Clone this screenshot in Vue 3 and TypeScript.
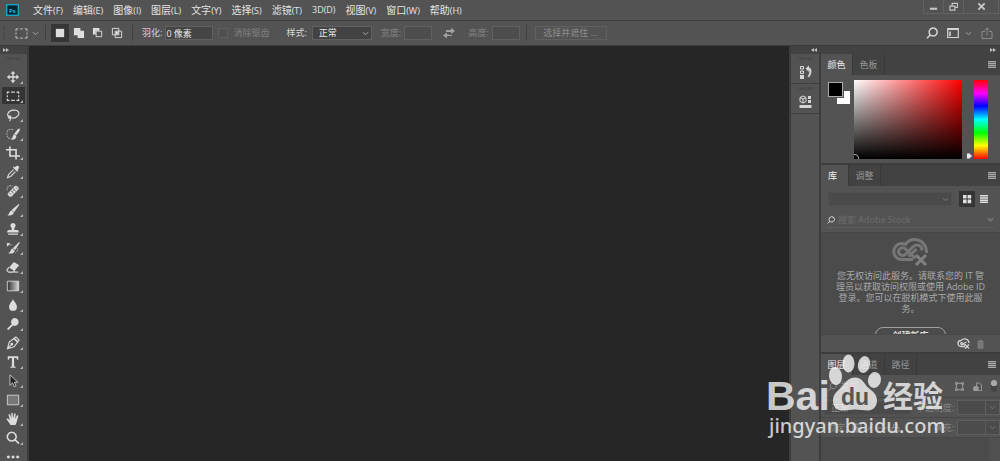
<script setup lang="ts">
import { ref } from 'vue'

interface Stroke {
  d: string
  kind?: 'line' | 'thick' | 'dash' | 'dim' | 'dark' | 'grad'
}
interface Tool {
  name: string
  paths: Stroke[]
  plain?: boolean
}

const menus = [
  ['文件', '(F)'], ['编辑', '(E)'], ['图像', '(I)'], ['图层', '(L)'], ['文字', '(Y)'], ['选择', '(S)'],
  ['滤镜', '(T)'], ['', '3D(D)'], ['视图', '(V)'], ['窗口', '(W)'], ['帮助', '(H)'],
]

const tools: Tool[] = [
  { name: '移动', paths: [{ d: 'M8 1l2.800 3.200H8.800v3h3V5.200L15 8l-3.200 2.800v-2h-3v3h2L8 15l-2.800-3.200h2v-3h-3v2L1 8l3.200-2.800v2h3v-3h-2z' }] },
  { name: '矩形选框', paths: [{ d: 'M1.500 5.500V3.500H4M6 3.500h4M12 3.500h2.500v2M14.500 7.200v2.200M14.500 11v2H12M10 13H6M4 13H1.500v-2M1.500 9.400V7.200', kind: 'line' }] },
  { name: '套索', paths: [{ d: 'M4 10.500C-.5 8.500 2.500 3 8.500 2.500S16 6 13.500 9 7 12 4 10.500M2.500 10c0-1.500 3-1.500 3 .3s-3 1.600-3 0M4.500 11.500c.8 1.200.5 2.500-.5 3.500', kind: 'line' }] },
  { name: '快速选择', paths: [{ d: 'M8 3C4 1.500 1 4 1 8s3 6.500 6.500 5', kind: 'dash' }, { d: 'M15.500 1.500l.3 2.500-4 5.500-2.500-1.500 4-5.500zM9.200 8.300l2.600 2c0 2.800-2 4.500-5.800 4.200 1.800-.9 1.200-4.900 3.200-6.200z' }] },
  { name: '裁剪', paths: [{ d: 'M4.500.5v11H16M0 4.200h11.500V15.500', kind: 'thick' }] },
  { name: '吸管', paths: [{ d: 'M10 2.800c1.200-1.500 2.800-2.600 4.200-1.500s.6 3-1 4.300l.8 1-1.200 1.200-5-5L9 1.700z' }, { d: 'M8.600 5.200L3 10.800l-1.300 3.500 3.600-1.200 5.500-5.600', kind: 'line' }] },
  { name: '修复画笔', paths: [{ d: 'M1.500 7C0 3 4 .8 7.500 2.500', kind: 'dash' }, { d: 'M2.200 10.500l8-8.300c1.500-1.400 5.600 2.200 4.200 3.800l-8 8.300c-1.500 1.500-5.700-2.300-4.200-3.800z' }, { d: 'M5.500 7.500l3.500 3.500M8 5l3.500 3.400M7 8.800l2.500-2.500M3.700 10.200l2 2M11.500 4l1.500 1.600', kind: 'dark' }] },
  { name: '画笔', paths: [{ d: 'M14.500 1.200l.8.800-6.100 8.500-2.800-2.500zM6.200 8.500l2.700 2.400c-.5 2.800-3.900 4.200-7.500 3 2.500-.4 2.200-4.800 4.800-5.400z' }] },
  { name: '仿制图章', paths: [{ d: 'M8 1a3 3 0 0 1 2 5.200c-.6.700-.7 1.800-.4 2.800H13c1.200 0 1.700 1 1.700 3H1.300c0-2 .5-3 1.700-3h3.400c.3-1 .2-2.100-.4-2.800A3 3 0 0 1 8 1zM2.500 13h11v1.700h-11z' }] },
  { name: '历史记录画笔', paths: [{ d: 'M1 4.500h6.500M12.500 8c2 1 .5 4-2 5.500', kind: 'dash' }, { d: 'M1 2.200l4 .3-3.800 4zM15 1l.8.900-5.400 8.500-2.600-2.200zM7.300 8.600l2.700 2.400c-.5 2.800-3.900 4-7.500 2.900 2.800-.4 2.400-4.500 4.800-5.300z' }] },
  { name: '橡皮擦', paths: [{ d: 'M9 2.200L15 6l-5.500 6.500-6-4z' }, { d: 'M3.400 8.500L1.300 11c-.5.800-.2 1.600.5 2l1.300.8h5l2-2', kind: 'line' }, { d: 'M9 13.800h5', kind: 'line' }] },
  { name: '渐变', paths: [{ d: 'M1.500 2.500h13v11h-13z', kind: 'grad' }] },
  { name: '模糊', paths: [{ d: 'M8 1.200c1 3 4.500 5.500 4.500 9a4.500 4.500 0 0 1-9 0c0-3.500 3.500-6 4.500-9z' }] },
  { name: '减淡', paths: [{ d: 'M10 1.200a4.500 4.500 0 1 1-2.100 8.500L3 14.700c-.6.500-2-.8-1.500-1.500l5-5A4.500 4.500 0 0 1 10 1.200z' }] },
  { name: '钢笔', paths: [{ d: 'M1.700 14.500l2-7.500L9 3l4.200 4.200-4 5.200zM9.500 2.500l1.800-1.400 3.600 3.600-1.400 1.900zM2 14.200l5-5M7 8.200a1 1 0 1 0 .1 1.900A1 1 0 0 0 7 8.200', kind: 'line' }] },
  { name: '横排文字', paths: [{ d: 'M2 1.500h12v4h-1.300c-.1-1.500-.7-2-2-2H9.300v8.700c0 .9.300 1.200 1.700 1.200v1.100H5v-1.100c1.400 0 1.700-.3 1.700-1.200V3.500H5.300c-1.300 0-1.900.5-2 2H2z' }] },
  { name: '路径选择', paths: [{ d: 'M4.500 1v12l3-2.900 1.800 4.400 2.200-1-1.900-4.100h4z', kind: 'dim' }] },
  { name: '矩形', paths: [{ d: 'M1.500 2.500h13v11h-13z', kind: 'grad' }] },
  { name: '抓手', paths: [{ d: 'M5.200 14.800C4 13 1.600 9.600.8 8.500c-.4-1.100.9-1.600 1.700-.8l1.800 1.800L3 3.500c-.2-1.200 1.300-1.500 1.700-.4l1.500 4-.2-5.300C6 .5 7.600.5 7.700 1.700L8.300 7l1-4.800c.3-1.200 1.800-.9 1.700.3L10.500 7.600l1.900-3.300c.6-1 2-.4 1.600.7-1 3-1.500 7-3.200 9.800z' }] },
  { name: '缩放', paths: [{ d: 'M6.500 1.500a5 5 0 1 0 .1 0M10.200 9.800l4.600 4.600', kind: 'thick' }] },
  { name: '编辑工具栏', plain: true, paths: [{ d: 'M2.700 6.300a1.700 1.700 0 1 0 .1 0M8 6.300a1.700 1.700 0 1 0 .1 0M13.300 6.300a1.700 1.700 0 1 0 .1 0' }] },
]

const modes: { name: string; d: string; line?: string }[] = [
  { name: '新选区', d: 'M2 2h9v9H2z' },
  { name: '添加到选区', d: 'M1 1h7v3h4v8H5V9H1z' },
  { name: '从选区减去', d: 'M1 1h7v3H4v4H1z', line: 'M4.500 4.500h6v6h-6z' },
  { name: '与选区交叉', d: 'M5 5h3v3H5z', line: 'M1.500 1.500h7v7h-7zM4.500 4.500h7v7h-7z' },
]

const activeTool = ref(1)
const activeMode = ref(0)
const feather = ref('0 像素')
const message = ['您无权访问此服务。请联系您的 IT 管', '理员以获取访问权限或使用 Adobe ID', '登录。您可以在脱机模式下使用此服', '务。']
</script>

<template>
  <div class="app">
    <header class="menubar">
      <svg class="logo" viewBox="0 0 13 12" aria-label="Ps">
        <rect x=".7" y=".7" width="11.600" height="10.600" fill="#04222f" stroke="#18a5c4" stroke-width="1.400" />
        <text x="3" y="8.600" font-size="6" font-weight="700" fill="#20b4d6">Ps</text>
      </svg>
      <nav>
        <button v-for="[label, key] in menus" :key="key" type="button">{{ label }}<span>{{ key }}</span></button>
      </nav>
      <div class="window-buttons">
        <button type="button" aria-label="最小化"><svg viewBox="0 0 10 10"><path d="M1 7.500h8" stroke-width="2.400" /></svg></button>
        <button type="button" aria-label="还原"><svg viewBox="0 0 10 10"><path d="M3.500 4V1.500h6v4.500H7M1 4.500h5.500V9H1z" stroke-width="1.300" /></svg></button>
        <button type="button" aria-label="关闭" class="close"><svg viewBox="0 0 10 10"><path d="M1.500 1.500l7 7M8.500 1.500l-7 7" stroke-width="2" /></svg></button>
      </div>
    </header>

    <div class="options">
      <i class="grip-v"></i>
      <button type="button" class="preset" aria-label="工具预设">
        <svg class="marquee" viewBox="0 0 14 12"><path d="M1 3.500V1h2.500M5.500 1h3M10.500 1H13v2.500M13 5v2M13 8.500V11h-2.500M8.500 11h-3M3.500 11H1V8.500M1 7V5" /></svg>
        <svg class="chev" viewBox="0 0 8 6"><path d="M1 1.500l3 3 3-3" /></svg>
      </button>
      <i class="rule"></i>
      <div class="modes">
        <button v-for="(m, i) in modes" :key="m.name" type="button" :aria-label="m.name" :class="{ on: i === activeMode }" @click="activeMode = i">
          <svg viewBox="0 0 13 13"><path :d="m.d" /><path v-if="m.line" class="outline" :d="m.line" /></svg>
        </button>
      </div>
      <i class="rule"></i>
      <label class="field">羽化:<input v-model="feather" class="wide" /></label>
      <label class="check off"><input type="checkbox" disabled />消除锯齿</label>
      <label class="field style-field">样式:
        <span class="pick"><select><option>正常</option></select><svg class="chev" viewBox="0 0 8 6"><path d="M1 1.500l3 3 3-3" /></svg></span>
      </label>
      <label class="field off">宽度:<input disabled /></label>
      <button type="button" class="swap" aria-label="互换"><svg viewBox="0 0 12 12"><path d="M3 3h5V.8L12 4 8 7V5H3zM9 9H4v2.200L0 8.500l4-3V7.500h2V8h3z" /></svg></button>
      <label class="field off">高度:<input disabled /></label>
      <i class="rule"></i>
      <button type="button" class="mask" disabled>选择并遮住 ...</button>
      <div class="right-tools">
        <button type="button" aria-label="搜索"><svg viewBox="0 0 12 12"><path d="M7.200 1a4 4 0 1 1-.1 0M4.300 7.800L1 11.200" stroke-width="1.500" /></svg></button>
        <button type="button" aria-label="工作区" class="workspace-btn"><svg viewBox="0 0 12 12"><path d="M.7 1.500h10.600v9H.7z" stroke-width="1.200" /><path d="M1 2.200h10M3 4.500v4.500" stroke-width="1.600" /></svg><svg class="chev" viewBox="0 0 8 6"><path d="M1 1.500l3 3 3-3" /></svg></button>
        <button type="button" aria-label="共享" class="share"><svg viewBox="0 0 12 12"><path d="M4 4.500H1v7h10v-7H8M6 8.500V1M3.500 3.300L6 .8l2.500 2.500" /></svg></button>
      </div>
    </div>

    <main class="work">
      <aside class="toolbar">
        <div class="strip"><svg viewBox="0 0 6 4"><path d="M0 0l3 2-3 2zM3 0l3 2-3 2z" /></svg></div>
        <i class="grip-h"></i>
        <button v-for="(t, i) in tools" :key="t.name" type="button" :aria-label="t.name" :class="{ on: i === activeTool }" @click="activeTool = i">
          <svg class="tool" viewBox="0 0 16 16">
            <defs><linearGradient :id="'fade' + i"><stop offset="0" :stop-color="i === 11 ? '#303030' : '#777'" /><stop offset="1" :stop-color="i === 11 ? '#d8d8d8' : '#777'" /></linearGradient></defs>
            <path v-for="(p, n) in t.paths" :key="n" :d="p.d" :class="p.kind" :fill="p.kind === 'grad' ? `url(#fade${i})` : undefined" />
          </svg>
          <svg v-if="!t.plain" class="corner" viewBox="0 0 3 3"><path d="M3 0v3H0z" /></svg>
        </button>
      </aside>

      <section class="canvas"></section>

      <aside class="dock">
        <div class="strip end"><svg viewBox="0 0 6 4"><path d="M3 0L0 2l3 2zM6 0L3 2l3 2z" /></svg></div>
        <div class="dock-item">
          <i class="grip-h"></i>
          <button type="button" aria-label="历史记录"><svg viewBox="0 0 13 14"><path class="outline" d="M1.500 1.500h3v2.500h-3zM1.500 6h3v2.500h-3z" /><path d="M1 10h4v4H1zM6.500 3.500L10 .5v2c3 .6 3.500 5 .3 9.500H8.500c2-3.500 2.300-6.500 1.300-7.200V7z" /></svg></button>
        </div>
        <div class="dock-item">
          <i class="grip-h"></i>
          <button type="button" aria-label="属性"><svg viewBox="0 0 13 14"><path class="outline" d="M4 1L7 2.500v4L4 8 1 6.500v-4zM1 2.500L4 4l3-1.500M4 4v4" /><path d="M9 1h3v3H9zM9 5h3v3H9zM.5 10h12v3H.5z" /></svg></button>
        </div>
        <div class="dock-fill"></div>
      </aside>

      <aside class="panels">
        <div class="strip end"><svg viewBox="0 0 6 4"><path d="M0 0l3 2-3 2zM3 0l3 2-3 2z" /></svg></div>

        <section class="panel">
          <div class="tabs"><button type="button" class="on">颜色</button><button type="button">色板</button><button type="button" class="burger" aria-label="面板菜单"><i></i></button></div>
          <div class="color-body">
            <div class="swatches"><button type="button" class="bg" aria-label="背景色"></button><button type="button" class="fg" aria-label="前景色"></button></div>
            <div class="field-box"><svg viewBox="0 0 6 6"><path d="M0 1.500A4 4 0 0 1 4.500 6" /></svg></div>
            <svg class="pointer" viewBox="0 0 6 6"><path d="M0 0h3l3 3-3 3H0z" /></svg>
            <div class="hue"></div>
          </div>
        </section>

        <section class="panel">
          <div class="tabs lib"><button type="button" class="on">库</button><button type="button">调整</button><button type="button" class="burger" aria-label="面板菜单"><i></i></button></div>
          <div class="lib-top">
            <span class="pick flat"><select aria-label="库列表" disabled></select><svg class="chev" viewBox="0 0 8 6"><path d="M1 1.500l3 3 3-3" /></svg></span>
            <button type="button" class="on" aria-label="网格视图"><svg viewBox="0 0 10 10"><path d="M1 1h3.600v3.600H1zM5.600 1h3.600v3.600H5.600zM1 5.600h3.600v3.600H1zM5.600 5.600h3.600v3.600H5.600z" /></svg></button>
            <button type="button" aria-label="列表视图"><svg viewBox="0 0 10 10"><path d="M1 1h8v1.500H1zM1 3.200h8v1.500H1zM1 5.400h8v1.500H1zM1 7.600h8v1.500H1z" /></svg></button>
          </div>
          <label class="search">
            <svg viewBox="0 0 12 12"><path d="M7.200 1a4 4 0 1 1-.1 0M4.300 7.800L1 11.200" /></svg>
            <input placeholder="搜索 Adobe Stock" />
            <svg class="chev" viewBox="0 0 8 6"><path d="M1 1.500l3 3 3-3" /></svg>
          </label>
          <div class="lib-content">
            <svg class="cloud" viewBox="0 0 37 28">
              <path d="M21 21.500H10A8 8 0 0 1 9.500 5.500c1.500 0 2.500.2 4 .8C16 2.800 19 1.500 22.500 1.500 30 1.500 35 8 34.500 15" />
              <path d="M23.500 20.500L13.500 11C10 8 5 11.500 7 15.500c1.500 2.700 4.800 2.300 7 .3l7-7c4-3.500 9-1.300 9 3.700" />
              <path d="M16.500 18.500l8-7.500" />
              <path class="cross" d="M24 17l10 10M34 17L24 27" />
            </svg>
            <p><span v-for="line in message" :key="line">{{ line }}</span></p>
            <button type="button">创建新库</button>
          </div>
          <div class="lib-foot">
            <svg class="cc" viewBox="0 0 13 12"><path d="M8 8.500H4a3 3 0 0 1 0-6c3-3 8-1.500 8 2.500M8 7L5.500 5C4 4 3 6 4.500 6.800c1.500.6 2.500-2.800 5-2.300M8 6.500l4 4M12 6.500l-4 4" /></svg>
            <svg class="bin" viewBox="0 0 10 12"><path d="M1 3h8M3.500 3V1.500h3V3M2 4.500V11h6V4.500zM4 5v5M6 5v5" /></svg>
          </div>
        </section>

        <section class="panel layers">
          <div class="tabs"><button type="button" class="on">图层</button><button type="button">通道</button><button type="button">路径</button><button type="button" class="burger" aria-label="面板菜单"><i></i></button></div>
          <div class="row filter">
            <label><svg viewBox="0 0 12 12"><path d="M7.200 1a4 4 0 1 1-.1 0M4.300 7.800L1 11.200" /></svg>类型</label>
            <span class="filter-icons">
              <svg viewBox="0 0 10 10"><path d="M1.500 2v6M8.500 2v6M2 1.500h6M2 8.500h6M.5.5h2v2h-2zM7.500.5h2v2h-2zM.5 7.500h2v2h-2zM7.500 7.500h2v2h-2z" /></svg>
              <svg viewBox="0 0 10 10"><path d="M4 5V1h3l2.500 2.500v6H6M1 5.500h4.500v4H1z" /><path d="M1 5.500h4.500v4H1z" fill="#999" /></svg>
              <i class="toggle"></i>
            </span>
          </div>
          <div class="row">
            <span class="pick flat"><select aria-label="混合模式"><option>正常</option></select></span>
            <label>不透明度:<input disabled /></label>
            <button type="button" aria-label="不透明度选项"><svg class="chev" viewBox="0 0 8 6"><path d="M1 1.500l3 3 3-3" /></svg></button>
          </div>
          <div class="row">
            <span class="lock">锁定:
              <svg viewBox="0 0 52 10"><path d="M1 1h8v8H1zM1 5h8M5 1v8M14 9l7-8M26 5h9M30.500.5v9M40 4.500h7V9h-7zM41.500 4V1h4v3" /></svg>
            </span>
            <label>填充:<input disabled /></label>
            <button type="button" aria-label="填充选项"><svg class="chev" viewBox="0 0 8 6"><path d="M1 1.500l3 3 3-3" /></svg></button>
          </div>
          <div class="layer-list"><i></i></div>
        </section>
      </aside>
    </main>

    <svg class="watermark" viewBox="0 0 240 116" aria-label="Baidu 经验 jingyan.baidu.com">
      <g fill="#fff" fill-opacity=".76">
        <text x="6" y="65" font-size="41" class="brand">Bai</text>
        <ellipse cx="75.500" cy="31" rx="6.500" ry="9" transform="rotate(-8 75.500 31)" />
        <ellipse cx="88.500" cy="18.500" rx="6" ry="9" />
        <ellipse cx="104" cy="19.500" rx="6" ry="8.500" transform="rotate(12 104 19.500)" />
        <ellipse cx="114.500" cy="35" rx="6.500" ry="8" transform="rotate(12 114.500 35)" />
        <path d="M95 32.500c7 0 9 6 13 10 5 4 9 7 9 13 0 6-4 10-9 10-5 0-9-1-13-1s-8 1-13 1c-6 0-9-4-9-10 0-6 4-9 8-13 4-4 7-10 14-10z" />
        <text x="123" y="62" font-size="30" class="cn">经验</text>
        <text x="9" y="88" font-size="20" class="url">jingyan.baidu.com</text>
      </g>
      <text x="81" y="60" font-size="23" class="brand" fill="#555">du</text>
    </svg>
  </div>
</template>

<style>
body { margin: 0; background: #262626; }
</style>

<style scoped>
.app {
  position: relative; height: 100vh; display: flex; flex-direction: column; overflow: hidden;
  background: #3d3d3d; color: #d6d6d6; font: 9px/12px "Open Sans", "Noto Sans CJK SC", sans-serif;
}
* { box-sizing: border-box; }
button, input, select { font: inherit; color: inherit; border: 0; padding: 0; margin: 0; background: none; border-radius: 0; }
button { display: flex; align-items: center; justify-content: center; }
svg { display: block; flex: none; }
i { display: block; }

.menubar { display: flex; align-items: center; height: 20px; background: #535353; padding-left: 6px; flex: none; }
.logo { width: 13px; height: 12px; }
.menubar nav { display: flex; gap: 10px; margin-left: 14px; font-size: 10px; color: #e4e4e4; }
.menubar nav button { white-space: nowrap; align-items: baseline; }
.menubar nav span { font-size: 9px; }
.window-buttons { display: flex; margin-left: auto; align-self: flex-start; border: 1px solid #626262; border-top: 0; margin-right: 1px; }
.window-buttons button { width: 20px; height: 13px; border-right: 1px solid #626262; }
.window-buttons .close { width: 34px; border: 0; }
.window-buttons svg { width: 9px; height: 9px; fill: none; stroke: #c6c6c6; }

.options { display: flex; align-items: center; height: 24px; margin: 1px 0; background: #535353; flex: none; white-space: nowrap; }
.grip-v { width: 2px; height: 14px; margin-left: 3px; background: repeating-linear-gradient(#454545 0 1px, #535353 1px 2px); }
.preset { gap: 4px; margin: 0 6px 0 10px; }
.marquee { width: 13px; height: 11px; fill: none; stroke: #ccc; }
.chev { width: 7px; height: 5px; fill: none; stroke: #a5a5a5; stroke-width: 1.2; }
.rule { width: 1px; height: 16px; background: #404040; flex: none; }
.modes { display: flex; gap: 1px; margin: 0 6px 0 5px; }
.modes button { width: 18px; height: 18px; }
.modes .on { background: #363636; }
.modes svg { width: 12px; height: 12px; fill: #dedede; }
.outline { fill: none; stroke: #dedede; }
.field, .check { display: flex; align-items: center; gap: 3px; margin-left: 9px; }
.field input { width: 28px; height: 14px; border: 1px solid #616161; background: #4d4d4d; }
.field .wide { width: 48px; background: #454545; color: #e8e8e8; }
.off { color: #818181; }
.check { gap: 5px; margin-left: 5px; }
.check input { appearance: none; width: 10px; height: 10px; border: 1px solid #5f5f5f; background: #4f4f4f; }
.style-field { margin-left: 17px; gap: 5px; }
.pick { display: grid; align-items: center; }
.pick > * { grid-area: 1 / 1; }
.pick select { appearance: none; width: 60px; height: 14px; padding-left: 6px; background: #434343; border: 1px solid #616161; color: #e8e8e8; outline: 0; opacity: 1; }
.pick .chev { justify-self: end; margin-right: 3px; pointer-events: none; }
.swap { margin: 0 4px 0 11px; }
.swap svg { width: 12px; height: 12px; fill: #a2a2a2; }
.options .field + .rule { margin: 0 8px 0 6px; }
.options .modes + .rule { margin: 0; }
.mask { width: 72px; height: 14px; border: 1px solid #606060; color: #8e8e8e; }
.right-tools { display: flex; align-items: center; gap: 9px; margin-left: auto; margin-right: 7px; }
.right-tools svg { width: 12px; height: 12px; fill: none; stroke: #d4d4d4; }
.right-tools .workspace-btn { gap: 6px; }
.right-tools .chev { width: 7px; height: 5px; stroke: #a5a5a5; }
.right-tools .share svg { stroke: #8b8b8b; }

.work { flex: 1; display: flex; min-height: 0; }
.strip { height: 8px; background: #424242; display: flex; align-items: center; padding: 0 3px; flex: none; }
.strip.end { justify-content: flex-end; padding-right: 4px; }
.strip svg { width: 6px; height: 4px; fill: #bdbdbd; }
.toolbar { width: 27px; margin-right: 2px; background: #535353; display: flex; flex-direction: column; flex: none; }
.grip-h { width: 15px; height: 3px; margin: 3px auto 0; background: repeating-linear-gradient(90deg, #454545 0 1px, #535353 1px 2px); flex: none; }
.toolbar .grip-h { margin: 3px 0 7px 6px; }
.toolbar button { position: relative; justify-content: flex-start; width: 23px; height: 17px; margin: 1px 2px; padding-left: 4px; flex: none; }
.toolbar .on { background: #343434; }
.tool { width: 14px; height: 14px; fill: #dcdcdc; }
.corner { position: absolute; right: 2px; bottom: 1px; width: 3px; height: 3px; fill: #b5b5b5; }
.tool .line, .tool .thick, .tool .dash { fill: none; stroke: #dcdcdc; stroke-width: 1.3; }
.tool .thick { stroke-width: 1.8; }
.tool .dash { stroke: #a5a5a5; stroke-dasharray: 2 1; }
.tool .dark { fill: none; stroke: #666; }
.tool .dim { fill: #222; stroke: #d0d0d0; stroke-width: 1; }
.tool .grad { stroke: #d8d8d8; }
.canvas { flex: 1; background: #262626; }

.dock { width: 30px; margin-left: 2px; display: flex; flex-direction: column; flex: none; background: #3d3d3d; }
.dock-item { height: 29px; margin: 0 2px 1px 0; background: #535353; }
.dock-item button { width: 100%; height: 24px; }
.dock-item svg { width: 13px; height: 14px; fill: #d6d6d6; }
.dock-fill { flex: 1; margin-right: 2px; background: #535353; }

.panels { display: flex; flex-direction: column; flex: 0 0 179px; min-width: 0; }
.panel { background: #535353; margin-bottom: 2px; flex: none; }
.tabs { display: flex; height: 21px; background: #424242; }
.tabs button { width: 32px; border-right: 1px solid #393939; color: #989898; }
.tabs .on { background: #535353; color: #eee; }
.tabs.lib .on { width: 28px; padding-right: 4px; }
.tabs .burger { margin-left: auto; width: 17px; border: 0; }
.burger i { width: 8px; height: 7px; background: repeating-linear-gradient(#a8a8a8 0 1px, #6a6a6a 1px 2px); }
.color-body { display: flex; height: 88px; padding: 5px 12px 4px 7px; }
.swatches { display: grid; grid-template: 13px 9px / 13px 9px; margin: 2px 4px 0 0; align-self: flex-start; }
.swatches .fg { grid-area: 1 / 1 / 2 / 2; width: 15px; height: 15px; background: #000; border: 1px solid #aaa; outline: 1px solid #555; }
.swatches .bg { grid-area: 1 / 1 / 3 / 3; width: 13px; height: 13px; place-self: end; background: #fff; }
.field-box { flex: 1; display: flex; align-items: flex-end; background: linear-gradient(transparent, #000), linear-gradient(90deg, #fff, #f00); }
.field-box svg { width: 6px; height: 6px; fill: none; stroke: #bbb; }
.pointer { width: 5px; height: 6px; margin: 0 2px 0 5px; align-self: flex-end; fill: #eee; }
.hue { width: 14px; background: linear-gradient(#f00, #f0f 17%, #00f 33%, #0ff 50%, #0f0 67%, #ff0 83%, #f00); }

.lib-top { display: flex; align-items: center; height: 26px; padding: 0 8px 0 7px; }
.lib-top .pick { flex: 1; margin-right: 6px; }
.lib-top .chev, .search .chev { stroke: #7b7b7b; }
.pick.flat select { width: 100%; background: #4a4a4a; border-color: #505050; }
.lib-top button { width: 16px; height: 16px; margin-left: 1px; }
.lib-top .on { background: #353535; }
.lib-top button svg { width: 10px; height: 10px; fill: #e0e0e0; }
.search { display: flex; align-items: center; height: 16px; margin: 0 6px; border-bottom: 1px solid #5d5d5d; }
.search svg { width: 8px; height: 8px; fill: none; stroke: #ddd; stroke-width: 1.5; }
.search .chev { width: 7px; height: 5px; }
.search input { flex: 1; min-width: 0; margin-left: 3px; font-size: 9px; outline: 0; }
.search input::placeholder { color: #6d6d6d; opacity: 1; }
.lib-content { height: 102px; margin-top: 4px; padding-top: 5px; overflow: hidden; background: #4b4b4b; border-top: 1px solid #464646; display: flex; flex-direction: column; align-items: center; color: #aaa; }
.cloud { width: 37px; height: 28px; fill: none; stroke: #777; stroke-width: 3; }
.cloud .cross { stroke: #808080; }
.lib-content p { margin: 4px 0 13px; line-height: 11px; text-align: center; white-space: nowrap; }
.lib-content p span { display: block; }
.lib-content button { width: 71px; height: 18px; flex: none; border: 1px solid #a0a0a0; border-radius: 8px; color: #ddd; font-weight: 600; }
.lib-foot { height: 18px; border-top: 1px solid #484848; display: flex; align-items: center; justify-content: flex-end; gap: 6px; padding-right: 15px; }
.cc { width: 13px; height: 12px; fill: none; stroke: #d2d2d2; stroke-width: 1.3; }
.bin { width: 9px; height: 10px; fill: #707070; stroke: #828282; }

.layers { flex: 1; margin: 0; display: flex; flex-direction: column; min-height: 0; }
.row { display: flex; align-items: center; height: 20px; flex: none; border-bottom: 1px solid #484848; padding-left: 3px; color: #858585; white-space: nowrap; }
.row.filter { height: 23px; justify-content: space-between; padding: 0 3px 0 7px; }
.row label { display: flex; align-items: center; gap: 3px; margin-left: auto; }
.row.filter label { margin: 0; }
.row svg { width: 9px; height: 9px; fill: none; stroke: #a0a0a0; }
.row .pick { width: 87px; }
.row select { color: #8d8d8d; }
.row input { width: 29px; height: 15px; border: 1px solid #5e5e5e; background: #4b4b4b; }
.row button { width: 14px; height: 15px; border: 1px solid #5e5e5e; border-left: 0; background: #4b4b4b; }
.row .chev { width: 7px; height: 5px; stroke: #777; }
.filter-icons { display: flex; align-items: center; gap: 9px; }
.toggle { width: 6px; height: 12px; border-radius: 3px; background: radial-gradient(circle at 3px 3px, #aaa 3px, #444 3px); }
.lock { display: flex; align-items: center; gap: 5px; padding-left: 3px; }
.lock svg { width: 52px; height: 10px; stroke: #888; }
.layer-list { flex: 1; background: #4b4b4b; display: flex; justify-content: flex-end; }
.layer-list i { width: 11px; background: #505050; }

.watermark { position: absolute; right: 0; bottom: 0; width: 240px; height: 116px; pointer-events: none; }
.brand { font-family: "Liberation Sans", sans-serif; font-weight: 700; }
.cn { font-family: "Noto Sans CJK SC", sans-serif; font-weight: 700; }
.url { font-family: "Noto Sans", sans-serif; font-weight: 500; }
</style>
